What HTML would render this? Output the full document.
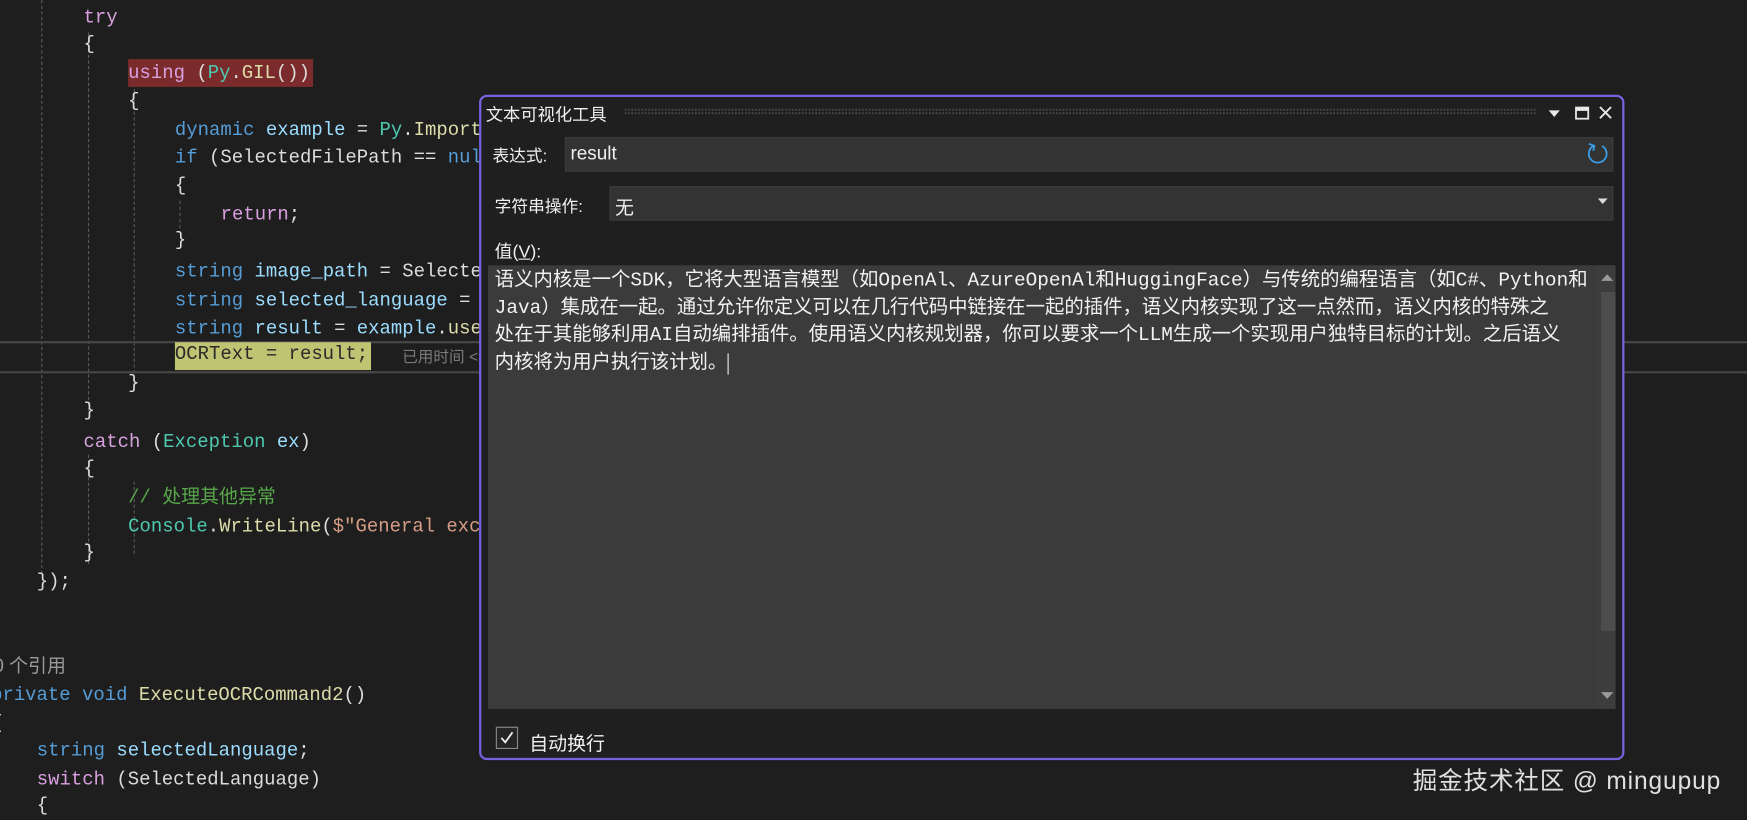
<!DOCTYPE html>
<html><head><meta charset="utf-8"><style>
html,body{margin:0;padding:0;background:#1e1e1e;overflow:hidden;width:1747px;height:817px}
#s{position:absolute;left:0;top:0;width:1568px;height:733px;transform:scale(1.11416,1.1146);transform-origin:0 0;background:#1e1e1e}
.l{position:absolute;white-space:pre;font-family:"Liberation Mono","Noto Sans CJK SC",monospace;font-size:17px;line-height:24px;color:#dcdcdc;margin-top:2px}
.k{color:#d8a0df}.b{color:#569cd6}.v{color:#9cdcfe}.t{color:#4ec9b0}.m{color:#dcdcaa}.s{color:#d69d85}.c{color:#57a64a}
.g{position:absolute;width:0;border-left:1px dashed #5a5a5a}
.cj{font-family:"Liberation Sans","Noto Sans CJK SC",sans-serif}
#d{position:absolute;left:430px;top:85px;width:1024px;height:593px;border:2px solid #7464e0;border-radius:7px;background:#1f1f1f;z-index:5}
.u{position:absolute;font-family:"Liberation Sans","Noto Sans CJK SC",sans-serif;font-size:15px;color:#f0f0f0;white-space:pre}
</style></head><body><div id="s">
<div class="g" style="left:37px;top:0;height:515px"></div>
<div class="g" style="left:79px;top:29px;height:340px"></div>
<div class="g" style="left:79px;top:408px;height:98px"></div>
<div class="g" style="left:120px;top:80px;height:265px"></div>
<div class="g" style="left:120px;top:432px;height:65px"></div>
<div class="g" style="left:161px;top:180px;height:25px"></div>
<div style="position:absolute;left:0;top:306px;width:1568px;height:25px;border-top:2px solid #464646;border-bottom:2px solid #464646"></div>
<div style="position:absolute;left:115px;top:53px;width:166px;height:25px;background:#7b2b2b"></div>
<div style="position:absolute;left:157px;top:307px;width:176px;height:25px;background:#bfc472"></div>
<div class="l k" style="left:75px;top:3px">try</div>
<div class="l" style="left:75px;top:27px">{</div>
<div class="l" style="left:115px;top:53px"><span class="k">using</span> (<span class="t">Py</span>.<span class="m">GIL</span>())</div>
<div class="l" style="left:115px;top:78px">{</div>
<div class="l" style="left:157px;top:104px"><span class="b">dynamic</span> <span class="v">example</span> = <span class="t">Py</span>.<span class="m">Import</span>("example");</div>
<div class="l" style="left:157px;top:129px"><span class="b">if</span> (SelectedFilePath == <span class="b">null</span>)</div>
<div class="l" style="left:157px;top:154px">{</div>
<div class="l k" style="left:198px;top:180px">return<span style="color:#dcdcdc">;</span></div>
<div class="l" style="left:157px;top:203px">}</div>
<div class="l" style="left:157px;top:231px"><span class="b">string</span> <span class="v">image_path</span> = SelectedFilePath;</div>
<div class="l" style="left:157px;top:257px"><span class="b">string</span> <span class="v">selected_language</span> = SelectedLanguage;</div>
<div class="l" style="left:157px;top:282px"><span class="b">string</span> <span class="v">result</span> = <span class="v">example</span>.<span class="m">useOCR</span>();</div>
<div class="l" style="left:157px;top:305px;color:#2a2a2a">OCRText = result;</div>
<div class="l cj" style="left:361px;top:306px;font-size:14px;color:#7a7a7a">已用时间 &lt;= 1ms</div>
<div class="l" style="left:115px;top:331px">}</div>
<div class="l" style="left:75px;top:356px">}</div>
<div class="l" style="left:75px;top:384px"><span class="k">catch</span> (<span class="t">Exception</span> <span class="v">ex</span>)</div>
<div class="l" style="left:75px;top:408px">{</div>
<div class="l c" style="left:115px;top:432px">// <span class="cj">处理其他异常</span></div>
<div class="l" style="left:115px;top:460px"><span class="t">Console</span>.<span class="m">WriteLine</span>(<span class="s">$"General exception"</span>);</div>
<div class="l" style="left:75px;top:483px">}</div>
<div class="l" style="left:33px;top:509px">});</div>
<div class="l cj" style="left:-6px;top:584px;font-size:17px;color:#9a9a9a">0 个引用</div>
<div class="l" style="left:-8px;top:611px"><span class="b">private</span> <span class="b">void</span> <span class="m">ExecuteOCRCommand2</span>()</div>
<div class="l" style="left:-8px;top:636px">{</div>
<div class="l" style="left:33px;top:661px"><span class="b">string</span> <span class="v">selectedLanguage</span>;</div>
<div class="l" style="left:33px;top:687px"><span class="k">switch</span> (SelectedLanguage)</div>
<div class="l" style="left:33px;top:710px">{</div>

<div id="d">
<div class="u" style="left:4px;top:4px;font-size:15.5px">文本可视化工具</div>
<div style="position:absolute;left:128px;top:10px;width:820px;height:6px;background-image:radial-gradient(#4a4a4a 0.8px,transparent 1px);background-size:3px 3px"></div>
<svg style="position:absolute;left:955px;top:6px" width="70" height="18"><path d="M3 6h10l-5 6z" fill="#e8e8e8"/><rect x="27.5" y="3.5" width="11" height="10" fill="none" stroke="#e8e8e8" stroke-width="1.6"/><rect x="27.5" y="3.5" width="11" height="3" fill="#e8e8e8"/><path d="M49 3l10 10M59 3l-10 10" stroke="#e8e8e8" stroke-width="1.7"/></svg>
<div class="u" style="left:10px;top:42px">表达式:</div>
<div style="position:absolute;left:75px;top:36px;width:939px;height:29px;background:#333333;border:1px solid #3c3c3c"></div>
<div class="u" style="left:80px;top:41px;font-size:17px">result</div>
<svg style="position:absolute;left:991px;top:39px" width="22" height="24"><path d="M7 5A8 8 0 1 0 15 5" fill="none" stroke="#3a9ee8" stroke-width="1.6"/><path d="M3 3l5 1.8-1 4.5" fill="none" stroke="#3a9ee8" stroke-width="1.6"/></svg>
<div class="u" style="left:12px;top:87px">字符串操作:</div>
<div style="position:absolute;left:115px;top:80px;width:899px;height:29px;background:#333333;border:1px solid #3c3c3c"></div>
<div class="u" style="left:120px;top:85px;font-size:17px">无</div>
<svg style="position:absolute;left:1002px;top:91px" width="10" height="6"><path d="M0 0h9l-4.5 5z" fill="#dcdcdc"/></svg>
<div class="u" style="left:12px;top:125px;font-size:16px">值(<u>V</u>):</div>
<div style="position:absolute;left:6px;top:151px;width:1012px;height:398px;background:#3b3b3b"></div>
<div style="position:absolute;left:1002px;top:151px;width:16px;height:398px;background:#3d3d3d"></div>
<div style="position:absolute;left:1005px;top:175px;width:13px;height:304px;background:#4d4d4d"></div>
<svg style="position:absolute;left:1005px;top:158px" width="12" height="8"><path d="M0 7h11l-5.5-6z" fill="#9a9a9a"/></svg>
<svg style="position:absolute;left:1005px;top:533px" width="12" height="8"><path d="M0 1h11l-5.5 6z" fill="#9a9a9a"/></svg>
<div class="u" style="left:12px;top:154px;font-size:17.4px;line-height:24.5px;font-family:'Liberation Mono','Noto Sans CJK SC',monospace;color:#f2f2f2">语义内核是一个SDK，它将大型语言模型（如OpenAl、AzureOpenAl和HuggingFace）与传统的编程语言（如C#、Python和
Java）集成在一起。通过允许你定义可以在几行代码中链接在一起的插件，语义内核实现了这一点然而，语义内核的特殊之
处在于其能够利用AI自动编排插件。使用语义内核规划器，你可以要求一个LLM生成一个实现用户独特目标的计划。之后语义
内核将为用户执行该计划。<span style="border-left:1px solid #eee"> </span></div>
<div style="position:absolute;left:13px;top:565px;width:18px;height:18px;border:1px solid #8a8a8a;background:#252525"></div>
<svg style="position:absolute;left:15px;top:567px" width="16" height="16"><path d="M3 8l3.5 4L13 3" fill="none" stroke="#f0f0f0" stroke-width="1.6"/></svg>
<div class="u" style="left:43px;top:566px;font-size:17px">自动换行</div>
</div>
<div class="u" style="left:1268px;top:683px;font-size:22px;letter-spacing:0.8px;color:#e0e0e0">掘金技术社区 @ mingupup</div>
</div></body></html>
